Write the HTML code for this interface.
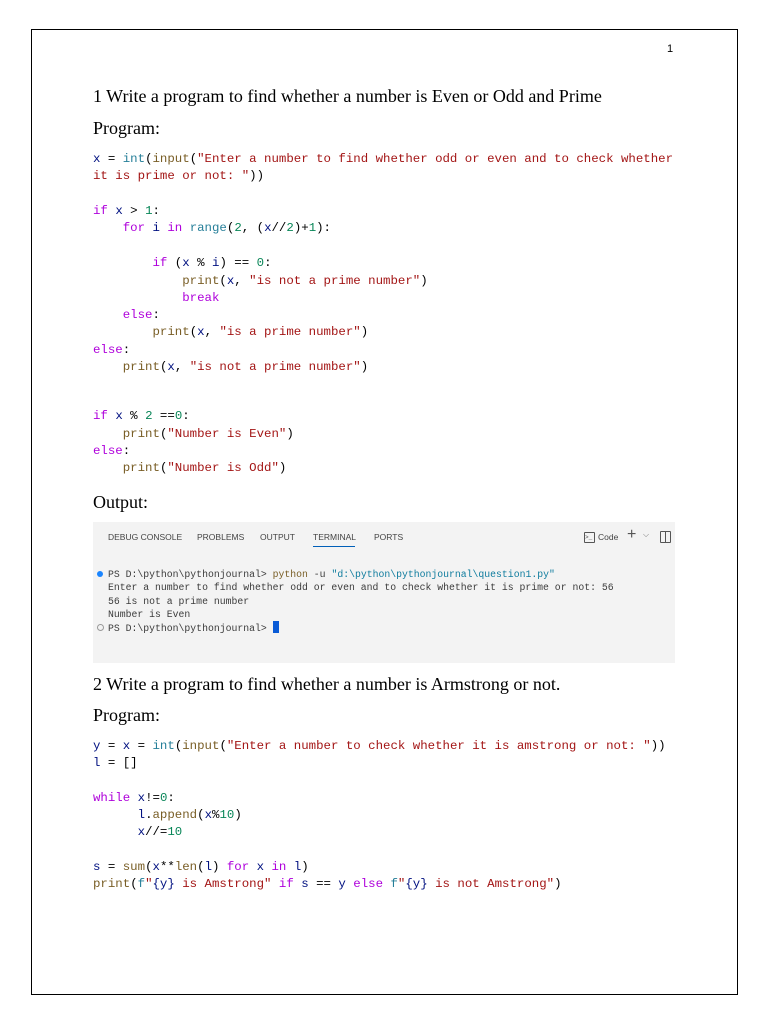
<!DOCTYPE html>
<html><head><meta charset="utf-8">
<style>
html,body{margin:0;padding:0;background:#fff;width:768px;height:1024px;overflow:hidden}
.border{position:absolute;left:31px;top:29px;width:705px;height:964px;border:1px solid #000}
.abs{position:absolute;white-space:pre}
.serif{font-family:"Liberation Serif",serif;font-size:18px;color:#000}
.c{position:absolute;left:93px;font-family:"Liberation Mono",monospace;font-size:12.4px;line-height:17px;white-space:pre;color:#000}
.k{color:#af00db}.s{color:#a31515}.f{color:#795e26}.v{color:#001080}.n{color:#098658}.b{color:#267f99}
.term{position:absolute;left:93px;top:522px;width:582px;height:141px;background:#f3f3f3}
.tab{position:absolute;top:10px;font-family:"Liberation Sans",sans-serif;font-size:8.5px;color:#444}
.t{position:absolute;left:15px;font-family:"Liberation Mono",monospace;font-size:9.8px;line-height:13px;white-space:pre;color:#3b3b3b}
</style></head><body>
<div class="border"></div>
<div class="abs" style="left:667px;top:43px;font-family:'Liberation Sans',sans-serif;font-size:11px">1</div>
<div class="abs serif" style="left:93px;top:86px">1 Write a program to find whether a number is Even or Odd and Prime</div>
<div class="abs serif" style="left:93px;top:118px">Program:</div>

<div class="c" style="top:151px"><span class="v">x</span> = <span class="b">int</span>(<span class="f">input</span>(<span class="s">"Enter a number to find whether odd or even and to check whether</span></div>
<div class="c" style="top:168px"><span class="s">it is prime or not: "</span>))</div>
<div class="c" style="top:203px"><span class="k">if</span> <span class="v">x</span> &gt; <span class="n">1</span>:</div>
<div class="c" style="top:220px">    <span class="k">for</span> <span class="v">i</span> <span class="k">in</span> <span class="b">range</span>(<span class="n">2</span>, (<span class="v">x</span>//<span class="n">2</span>)+<span class="n">1</span>):</div>
<div class="c" style="top:255px">        <span class="k">if</span> (<span class="v">x</span> % <span class="v">i</span>) == <span class="n">0</span>:</div>
<div class="c" style="top:273px">            <span class="f">print</span>(<span class="v">x</span>, <span class="s">"is not a prime number"</span>)</div>
<div class="c" style="top:290px">            <span class="k">break</span></div>
<div class="c" style="top:307px">    <span class="k">else</span>:</div>
<div class="c" style="top:324px">        <span class="f">print</span>(<span class="v">x</span>, <span class="s">"is a prime number"</span>)</div>
<div class="c" style="top:342px"><span class="k">else</span>:</div>
<div class="c" style="top:359px">    <span class="f">print</span>(<span class="v">x</span>, <span class="s">"is not a prime number"</span>)</div>
<div class="c" style="top:408px"><span class="k">if</span> <span class="v">x</span> % <span class="n">2</span> ==<span class="n">0</span>:</div>
<div class="c" style="top:426px">    <span class="f">print</span>(<span class="s">"Number is Even"</span>)</div>
<div class="c" style="top:443px"><span class="k">else</span>:</div>
<div class="c" style="top:460px">    <span class="f">print</span>(<span class="s">"Number is Odd"</span>)</div>

<div class="abs serif" style="left:93px;top:492px">Output:</div>

<div class="term">
<div class="tab" style="left:15px">DEBUG CONSOLE</div>
<div class="tab" style="left:104px">PROBLEMS</div>
<div class="tab" style="left:167px">OUTPUT</div>
<div class="tab" style="left:220px">TERMINAL</div>
<div style="position:absolute;left:220px;top:24px;width:42px;height:1px;background:#005fb8"></div>
<div class="tab" style="left:281px">PORTS</div>
<div style="position:absolute;left:491px;top:10px;width:9px;height:9px;border:1px solid #555;border-radius:1px;font-size:6px;line-height:9px;font-family:'Liberation Mono',monospace;color:#555">&gt;_</div>
<div class="tab" style="left:505px">Code</div>
<div class="abs" style="left:534px;top:4px;font-family:'Liberation Sans',sans-serif;font-size:16px;color:#555">+</div>
<div class="abs" style="left:550px;top:8px;font-family:'Liberation Sans',sans-serif;font-size:8px;color:#777">⌵</div>
<div style="position:absolute;left:567px;top:9px;width:9px;height:10px;border:1px solid #555;border-radius:1px"></div>
<div style="position:absolute;left:572px;top:9px;width:1px;height:12px;background:#555"></div>
<div style="position:absolute;left:4px;top:49px;width:6px;height:6px;border-radius:50%;background:#1a85ff"></div>
<div style="position:absolute;left:4px;top:102px;width:5px;height:5px;border-radius:50%;border:1px solid #999"></div>
<div class="t" style="top:46px">PS D:\python\pythonjournal&gt; <span style="color:#795e26">python</span> -u <span style="color:#0f7c9e">"d:\python\pythonjournal\question1.py"</span></div>
<div class="t" style="top:59px">Enter a number to find whether odd or even and to check whether it is prime or not: 56</div>
<div class="t" style="top:73px">56 is not a prime number</div>
<div class="t" style="top:86px">Number is Even</div>
<div class="t" style="top:99px">PS D:\python\pythonjournal&gt; <span style="display:inline-block;width:6px;height:12px;background:#0a5bd6;vertical-align:-2px"></span></div>
</div>

<div class="abs serif" style="left:93px;top:674px">2 Write a program to find whether a number is Armstrong or not.</div>
<div class="abs serif" style="left:93px;top:705px">Program:</div>

<div class="c" style="top:738px"><span class="v">y</span> = <span class="v">x</span> = <span class="b">int</span>(<span class="f">input</span>(<span class="s">"Enter a number to check whether it is amstrong or not: "</span>))</div>
<div class="c" style="top:755px"><span class="v">l</span> = []</div>
<div class="c" style="top:790px"><span class="k">while</span> <span class="v">x</span>!=<span class="n">0</span>:</div>
<div class="c" style="top:807px">      <span class="v">l</span>.<span class="f">append</span>(<span class="v">x</span>%<span class="n">10</span>)</div>
<div class="c" style="top:824px">      <span class="v">x</span>//=<span class="n">10</span></div>
<div class="c" style="top:859px"><span class="v">s</span> = <span class="f">sum</span>(<span class="v">x</span>**<span class="f">len</span>(<span class="v">l</span>) <span class="k">for</span> <span class="v">x</span> <span class="k">in</span> <span class="v">l</span>)</div>
<div class="c" style="top:876px"><span class="f">print</span>(<span class="b">f</span><span class="s">"</span><span class="v">{y}</span><span class="s"> is Amstrong"</span> <span class="k">if</span> <span class="v">s</span> == <span class="v">y</span> <span class="k">else</span> <span class="b">f</span><span class="s">"</span><span class="v">{y}</span><span class="s"> is not Amstrong"</span>)</div>
</body></html>
